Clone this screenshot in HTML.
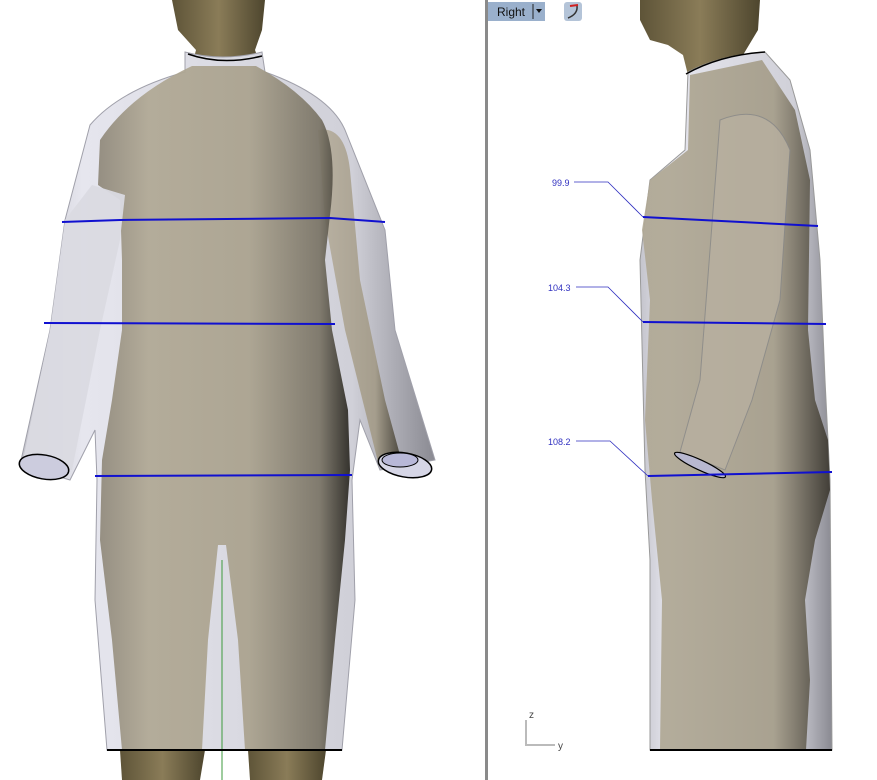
<!DOCTYPE html>
<html><head><meta charset="utf-8"><style>
html,body{margin:0;padding:0;background:#fff;width:877px;height:780px;overflow:hidden}
svg{display:block}
</style></head><body>
<svg width="877" height="780" viewBox="0 0 877 780" xmlns="http://www.w3.org/2000/svg">
<defs>
<linearGradient id="skin" x1="0" x2="1" y1="0" y2="0">
<stop offset="0" stop-color="#8f887a"/><stop offset="0.2" stop-color="#b0a894"/><stop offset="0.6" stop-color="#aaa28e"/><stop offset="0.88" stop-color="#7a7466"/><stop offset="1" stop-color="#2a2822"/></linearGradient>
<linearGradient id="cloth" x1="0" x2="1" y1="0" y2="0">
<stop offset="0" stop-color="#c4c4cc"/><stop offset="0.15" stop-color="#e6e6ee"/><stop offset="0.8" stop-color="#d0d0d8"/><stop offset="1" stop-color="#8a8a92"/></linearGradient>
<linearGradient id="head" x1="0" x2="1"><stop offset="0" stop-color="#5e5438"/><stop offset="0.5" stop-color="#8a7c58"/><stop offset="1" stop-color="#4e462e"/></linearGradient>
<linearGradient id="skinR" x1="0" x2="1"><stop offset="0" stop-color="#b0a894"/><stop offset="0.7" stop-color="#a49c88"/><stop offset="1" stop-color="#3a362e"/></linearGradient>
<linearGradient id="arm" x1="0" x2="1"><stop offset="0" stop-color="#b8b0a0"/><stop offset="0.7" stop-color="#a49c8a"/><stop offset="1" stop-color="#4a463c"/></linearGradient>
</defs>
<rect x="485" y="0" width="3" height="780" fill="#8a8a8a"/>

<!-- FRONT VIEW -->
<path d="M120 750 L205 750 L200 780 L122 780Z" fill="url(#head)"/>
<path d="M248 750 L326 750 L322 780 L250 780Z" fill="url(#head)"/>
<path d="M172 0 L265 0 L262 30 L255 50 L262 70 L190 72 L196 50 L178 30Z" fill="url(#head)"/>
<!-- garment -->
<path d="M185 52 Q222 62 262 52 L265 72 Q330 95 345 130 L385 230 L395 330 L435 460 L380 470 L360 420 L352 480 L355 600 L342 750 L107 750 L95 600 L97 480 L95 430 L70 480 L20 465 L50 330 L65 220 L90 125 Q120 90 185 72Z" fill="url(#cloth)" stroke="#a0a0aa" stroke-width="1"/>
<!-- right arm skin -->
<path d="M318 130 Q345 125 350 170 L360 280 L385 400 L400 455 L378 462 L345 330 L325 220Z" fill="url(#arm)" opacity="0.95"/>
<!-- torso skin -->
<path d="M192 66 L256 66 Q300 90 322 120 Q338 150 330 215 L325 260 L332 330 L348 410 L350 470 L345 540 L335 640 L325 750 L245 750 L238 640 L226 545 L218 545 L208 640 L202 750 L122 750 L112 640 L100 540 L102 460 L112 400 L122 330 L122 260 L120 200 L98 185 L100 140 Q130 95 192 66Z" fill="url(#skin)" opacity="0.93"/>
<!-- left sleeve tube -->
<path d="M92 185 L125 195 L120 240 L100 330 L72 470 L22 465 L50 330 L65 220Z" fill="#dadae2" opacity="0.95"/>
<ellipse cx="44" cy="467" rx="25" ry="12" fill="#ccccde" stroke="#000" stroke-width="1.5" transform="rotate(10 44 467)"/>
<ellipse cx="405" cy="465" rx="27" ry="12" fill="#d6d6e6" stroke="#000" stroke-width="1.5" transform="rotate(10 405 465)"/>
<ellipse cx="400" cy="460" rx="18" ry="7" fill="#b8b8d8" stroke="#000" stroke-width="1"/>
<path d="M188 54 Q222 66 262 56" fill="none" stroke="#000" stroke-width="1.5"/>
<line x1="222" y1="560" x2="222" y2="780" stroke="#3c9a3c" stroke-width="1"/>
<line x1="107" y1="750" x2="342" y2="750" stroke="#000" stroke-width="2"/>
<path d="M62 222 L120 220 L330 218 L385 222" fill="none" stroke="#1010d0" stroke-width="2"/>
<path d="M44 323 L335 324" fill="none" stroke="#1010d0" stroke-width="2"/>
<path d="M95 476 L352 475" fill="none" stroke="#1010d0" stroke-width="2"/>

<!-- RIGHT VIEW -->
<path d="M640 0 L760 0 L758 30 L740 60 L705 75 L688 75 L683 55 L668 45 L650 40 L640 20Z" fill="url(#head)"/>
<path d="M688 72 Q720 55 765 52 L790 80 L810 150 L820 260 L825 380 L830 480 L832 750 L650 750 L650 560 L645 470 L640 260 L650 180 L685 150Z" fill="url(#cloth)" stroke="#999" stroke-width="1"/>
<path d="M690 75 L762 60 L795 110 L810 180 L808 330 L815 400 L828 440 L830 490 L815 540 L805 600 L810 680 L806 750 L660 750 L662 600 L652 500 L645 420 L650 300 L642 230 L650 180 L688 150Z" fill="url(#skinR)" opacity="0.9"/>
<path d="M720 120 Q770 100 790 150 L780 300 L752 400 L725 470 L680 452 L700 380 L710 250Z" fill="#b8b0a0" opacity="0.8" stroke="#888" stroke-width="1"/>
<ellipse cx="700" cy="465" rx="28" ry="5" fill="#b8b8d0" stroke="#000" stroke-width="1.2" transform="rotate(25 700 465)"/>
<path d="M686 74 Q720 55 765 52" fill="none" stroke="#000" stroke-width="1.5"/>
<line x1="650" y1="750" x2="832" y2="750" stroke="#000" stroke-width="2"/>
<path d="M643 217 L818 226" stroke="#1010d0" stroke-width="2"/>
<path d="M643 322 L826 324" stroke="#1010d0" stroke-width="2"/>
<path d="M648 476 L832 472" stroke="#1010d0" stroke-width="2"/>
<path d="M574 182 L608 182 L643 217" fill="none" stroke="#3030c0" stroke-width="0.8"/>
<path d="M576 287 L608 287 L643 322" fill="none" stroke="#3030c0" stroke-width="0.8"/>
<path d="M576 441 L610 441 L648 476" fill="none" stroke="#3030c0" stroke-width="0.8"/>
<text x="552" y="186" font-family="Liberation Sans, sans-serif" font-size="9" fill="#3030c0">99.9</text>
<text x="548" y="291" font-family="Liberation Sans, sans-serif" font-size="9" fill="#3030c0">104.3</text>
<text x="548" y="445" font-family="Liberation Sans, sans-serif" font-size="9" fill="#3030c0">108.2</text>
<path d="M526 720 L526 745 L555 745" fill="none" stroke="#bbb" stroke-width="2"/>
<text x="529" y="718" font-family="Liberation Sans, sans-serif" font-size="10" fill="#444">z</text>
<text x="558" y="749" font-family="Liberation Sans, sans-serif" font-size="10" fill="#444">y</text>
<rect x="488" y="2" width="57" height="19" fill="#9ab0cc"/>
<text x="497" y="16" font-family="Liberation Sans, sans-serif" font-size="12" fill="#111">Right</text>
<line x1="533" y1="4" x2="533" y2="19" stroke="#222" stroke-width="1"/>
<path d="M536 9 L542 9 L539 13Z" fill="#111"/>
<rect x="564" y="2" width="18" height="19" rx="3" fill="#b4c4d8"/>
<path d="M568 18 Q578 14 577 6" fill="none" stroke="#333" stroke-width="1.5"/>
<path d="M570 6 L578 5" stroke="#d02020" stroke-width="2"/>
</svg>
</body></html>
